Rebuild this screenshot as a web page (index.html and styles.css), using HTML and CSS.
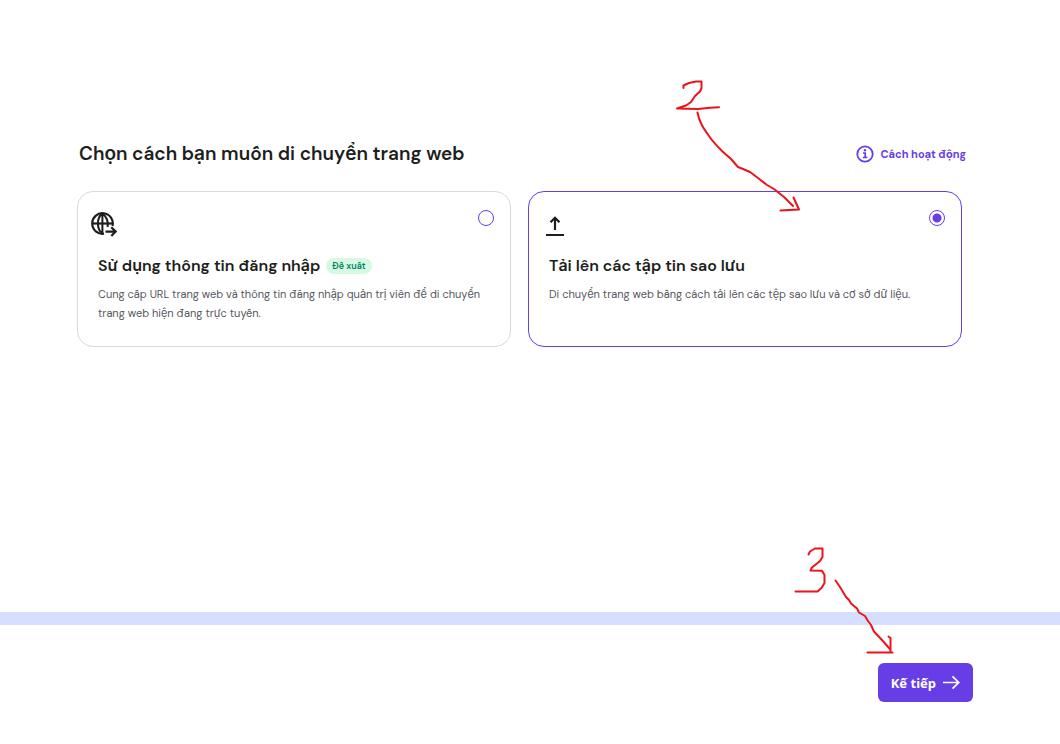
FILE: index.html
```html
<!DOCTYPE html>
<html lang="vi">
<head>
    <meta charset="UTF-8">
    <meta name="viewport" content="width=device-width, initial-scale=1.0">
    <title>Di chuyển trang web</title>
    <link rel="stylesheet" href="styles.css">
</head>
<body>
    <main class="content">
        <div class="header">
            <h1>Chọn cách bạn muốn di chuyển trang web</h1>
            <a href="#" class="help-link">
                <svg width="18" height="18" viewBox="0 0 18 18" fill="none" stroke="currentColor">
                    <circle cx="9" cy="9" r="7.7" stroke-width="1.8"/>
                    <path d="M7 8h2.200v4.500M6.800 12.500h4.600" stroke-width="1.700"/>
                    <circle cx="9" cy="5.300" r="1.200" fill="currentColor" stroke="none"/>
                </svg>
                <span>Cách hoạt động</span>
            </a>
        </div>

        <div class="options">
            <label class="card">
                <span class="card-head">
                    <svg width="26" height="26" viewBox="0 0 26 26" fill="none" stroke="#1d1e20" stroke-width="2.2">
                        <path d="M21.500 14A10.300 10.300 0 1 0 13 21.700"/>
                        <path d="M11.400 1.400C5.400 6 5.400 17 11.400 21.700M11.400 1.400C16 5 17.300 10 16.600 15M11.400 1.500V21.500" stroke-width="2"/>
                        <path d="M1.500 11.500H21.500"/>
                        <path d="M14.500 19.600H24.500M20.300 15.200L24.700 19.600L20.300 24"/>
                    </svg>
                    <input type="radio" name="method" value="login">
                </span>
                <span class="card-body">
                    <span class="card-title">Sử dụng thông tin đăng nhập <span class="badge">Đề xuất</span></span>
                    <span class="card-text">Cung cấp URL trang web và thông tin đăng nhập quản trị viên để di chuyển trang web hiện đang trực tuyến.</span>
                </span>
            </label>

            <label class="card selected">
                <span class="card-head">
                    <svg width="26" height="26" viewBox="0 0 26 26" fill="none" stroke="#1d1e20" stroke-width="2.2">
                        <path d="M4 23H22M13 18V6M8.500 10.200L13 5.700L17.500 10.200"/>
                    </svg>
                    <input type="radio" name="method" value="upload" checked>
                </span>
                <span class="card-body">
                    <span class="card-title">Tải lên các tập tin sao lưu</span>
                    <span class="card-text">Di chuyển trang web bằng cách tải lên các tệp sao lưu và cơ sở dữ liệu.</span>
                </span>
                <!-- hand-drawn note for step 2 -->
                <svg class="mark mark-card" width="160" height="150" viewBox="0 0 160 150">
                    <path d="M23.500 18V15.500L29 13L36 11.500H41.500V18L40 21.500L35 26L31 32L26 35.500L17 38.500L38 39L50 37.800L59 37.300"/>
                    <path d="M37.500 42.500C39 52 44 59 49 66C53 72 57 76 62 81L71 89L78 97L83 99L90 102L98 108L107 115L114 119L124 127L129 132L133 136"/>
                    <path d="M133.500 127.500L139 139.500L120.500 140.500"/>
                </svg>
            </label>
        </div>
    </main>

    <footer class="footer">
        <div class="next">
            <button type="button" class="next-button">
                <span>Kế tiếp</span>
                <svg width="18" height="16" viewBox="0 0 18 16" fill="none" stroke="currentColor" stroke-width="1.700">
                    <path d="M1 7.500H16.500M10.500 1.300L16.700 7.500L10.500 13.700"/>
                </svg>
            </button>
            <!-- hand-drawn note for step 3 -->
            <svg class="mark mark-next" width="130" height="125" viewBox="0 0 130 125">
                <path d="M28.500 19.500L30 16.500L35 13.500H42.500V22L40 26L32 32.500L30.500 35.500L42 35.800L44.500 40V48L41.500 53L37.500 56.500H15.500"/>
                <path d="M55.500 45.500L60 52L66 62L69 65L71 68.500L77 73.500L79 77.500L85 81L88 86L91 90L94 96.500L101 104L110 114"/>
                <path d="M108.500 101.500L110.500 103V117.500M87.500 117.500H112.500"/>
            </svg>
        </div>
    </footer>
</body>
</html>
```
FILE: styles.css
```css
* {
    box-sizing: border-box;
}
body {
    font-family: "DM Sans", Inter, sans-serif;
    margin: 0;
    min-height: 100vh;
    display: flex;
    flex-direction: column;
    background-color: #fff;
    color: #1d1e20;
}
.content {
    flex: 1;
    padding: 139px 98px 40px 77px;
}
.header {
    display: flex;
    justify-content: space-between;
    align-items: center;
    margin-right: -4px;
    margin-bottom: 23px;
    padding-left: 2px;
}
.header h1 {
    font-size: 19px;
    line-height: 29px;
    font-weight: 600;
    margin: 0;
}
.help-link {
    display: flex;
    align-items: center;
    gap: 7px;
    color: #673de6;
    font-size: 11px;
    font-weight: 700;
    text-decoration: none;
    white-space: nowrap;
}
.options {
    display: grid;
    grid-template-columns: 1fr 1fr;
    gap: 17px;
}
.card {
    position: relative;
    border: 1px solid #d8dae0;
    border-radius: 16px;
    cursor: pointer;
}
.card.selected {
    border-color: #673de6;
}
.card-head {
    display: flex;
    justify-content: space-between;
    align-items: flex-start;
    padding: 18px 16px 0 13px;
}
.card-head svg {
    margin-top: 2px;
}
.card-head input {
    appearance: none;
    width: 16px;
    height: 16px;
    margin: 0;
    border: 1px solid #673de6;
    border-radius: 50%;
}
.card-head input:checked {
    background: radial-gradient(circle, #673de6 4px, transparent 5px);
}
.card-body {
    display: block;
    padding: 16px 20px 23px;
}
.card-title {
    display: flex;
    align-items: center;
    gap: 6px;
    font-size: 16px;
    line-height: 24px;
    font-weight: 600;
    margin-bottom: 7px;
}
.badge {
    padding: 0 6px;
    border-radius: 8px;
    background-color: #d7f9e3;
    color: #008361;
    font-size: 9px;
    line-height: 16px;
}
.card-text {
    display: block;
    color: #56585e;
    font-size: 11px;
    line-height: 19px;
}
.footer {
    display: flex;
    justify-content: flex-end;
    border-top: 13px solid #d5dfff;
    padding: 38px 87px 42px 77px;
}
.next {
    position: relative;
}
.next-button {
    display: flex;
    align-items: center;
    gap: 6px;
    height: 39px;
    padding: 0 13px;
    border: none;
    border-radius: 6px;
    background-color: #673de6;
    color: #fff;
    font-family: "Noto Sans", "Open Sans", sans-serif;
    font-size: 13px;
    line-height: 18px;
    font-weight: 700;
    cursor: pointer;
}
.mark {
    position: absolute;
    fill: none;
    stroke: #ea141c;
    stroke-width: 2;
    stroke-linecap: round;
    stroke-linejoin: round;
    pointer-events: none;
}
.mark-card {
    top: -122px;
    right: 141px;
}
.mark-next {
    top: -128px;
    right: 63px;
}
```
